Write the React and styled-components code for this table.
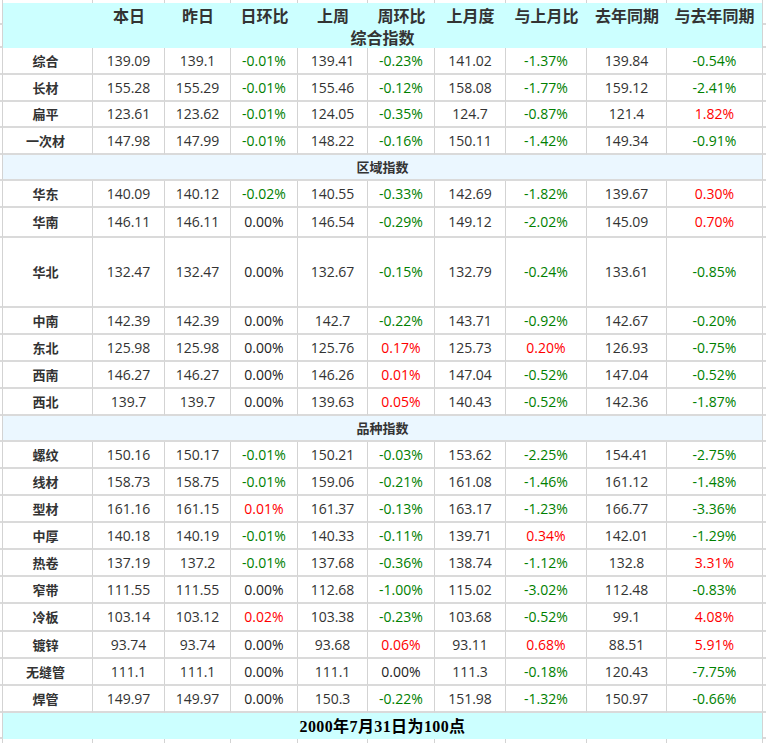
import React from "react";
import styled, { createGlobalStyle } from "styled-components";

const GlobalStyle = createGlobalStyle`
  body {
    margin: 0;
    background: #ffffff;
    font-family: "Open Sans", "Noto Sans CJK SC", sans-serif;
  }
`;

const COLS = "3px 90px 72px 66px 67px 70px 67px 71px 81px 80px 96px 1fr";

const headers = ["本日", "昨日", "日环比", "上周", "周环比", "上月度", "与上月比", "去年同期", "与去年同期"];

const groups = [
  {
    rows: [
      ["综合", "139.09", "139.1", "-0.01%", "139.41", "-0.23%", "141.02", "-1.37%", "139.84", "-0.54%", 27],
      ["长材", "155.28", "155.29", "-0.01%", "155.46", "-0.12%", "158.08", "-1.77%", "159.12", "-2.41%", 27],
      ["扁平", "123.61", "123.62", "-0.01%", "124.05", "-0.35%", "124.7", "-0.87%", "121.4", "1.82%", 26],
      ["一次材", "147.98", "147.99", "-0.01%", "148.22", "-0.16%", "150.11", "-1.42%", "149.34", "-0.91%", 27],
    ],
  },
  {
    title: "区域指数",
    rows: [
      ["华东", "140.09", "140.12", "-0.02%", "140.55", "-0.33%", "142.69", "-1.82%", "139.67", "0.30%", 27],
      ["华南", "146.11", "146.11", "0.00%", "146.54", "-0.29%", "149.12", "-2.02%", "145.09", "0.70%", 30],
      ["华北", "132.47", "132.47", "0.00%", "132.67", "-0.15%", "132.79", "-0.24%", "133.61", "-0.85%", 70],
      ["中南", "142.39", "142.39", "0.00%", "142.7", "-0.22%", "143.71", "-0.92%", "142.67", "-0.20%", 27],
      ["东北", "125.98", "125.98", "0.00%", "125.76", "0.17%", "125.73", "0.20%", "126.93", "-0.75%", 27],
      ["西南", "146.27", "146.27", "0.00%", "146.26", "0.01%", "147.04", "-0.52%", "147.04", "-0.52%", 27],
      ["西北", "139.7", "139.7", "0.00%", "139.63", "0.05%", "140.43", "-0.52%", "142.36", "-1.87%", 27],
    ],
  },
  {
    title: "品种指数",
    rows: [
      ["螺纹", "150.16", "150.17", "-0.01%", "150.21", "-0.03%", "153.62", "-2.25%", "154.41", "-2.75%", 27],
      ["线材", "158.73", "158.75", "-0.01%", "159.06", "-0.21%", "161.08", "-1.46%", "161.12", "-1.48%", 27],
      ["型材", "161.16", "161.15", "0.01%", "161.37", "-0.13%", "163.17", "-1.23%", "166.77", "-3.36%", 27],
      ["中厚", "140.18", "140.19", "-0.01%", "140.33", "-0.11%", "139.71", "0.34%", "142.01", "-1.29%", 27],
      ["热卷", "137.19", "137.2", "-0.01%", "137.68", "-0.36%", "138.74", "-1.12%", "132.8", "3.31%", 27],
      ["窄带", "111.55", "111.55", "0.00%", "112.68", "-1.00%", "115.02", "-3.02%", "112.48", "-0.83%", 27],
      ["冷板", "103.14", "103.12", "0.02%", "103.38", "-0.23%", "103.68", "-0.52%", "99.1", "4.08%", 28],
      ["镀锌", "93.74", "93.74", "0.00%", "93.68", "0.06%", "93.11", "0.68%", "88.51", "5.91%", 27],
      ["无缝管", "111.1", "111.1", "0.00%", "111.1", "0.00%", "111.3", "-0.18%", "120.43", "-7.75%", 27],
      ["焊管", "149.97", "149.97", "0.00%", "150.3", "-0.22%", "151.98", "-1.32%", "150.97", "-0.66%", 27],
    ],
  },
];

const Sheet = styled.div`
  width: 766px;
  overflow: hidden;
`;

const Row = styled.div`
  display: grid;
  grid-template-columns: ${COLS};
  height: ${(p) => p.$h}px;
`;

const Cell = styled.div`
  box-sizing: border-box;
  display: flex;
  align-items: center;
  justify-content: center;
  border-right: 1px solid #d3d3d3;
  border-bottom: ${(p) => (p.$open ? "none" : "2px solid #dadada")};
  font-size: 14px;
  line-height: 18px;
  color: #333333;
  white-space: nowrap;
`;

const Label = styled(Cell)`
  font-family: "Noto Sans CJK SC", sans-serif;
  font-size: 13px;
  font-weight: 700;
  padding-right: 4px;
`;

const Pct = styled(Cell)`
  color: ${(p) => (p.$tone === "down" ? "#008000" : p.$tone === "up" ? "#ff0000" : "#222222")};
`;

const Tail = styled.div`
  box-sizing: border-box;
  border-bottom: ${(p) => (p.$open ? "none" : "2px solid #dadada")};
`;

const HeadCell = styled.div`
  box-sizing: border-box;
  display: flex;
  align-items: center;
  justify-content: center;
  padding-top: 2px;
  background: #ccffff;
  border-right: ${(p) => (p.$last ? "1px solid #d3d3d3" : "none")};
  font-family: "Noto Sans CJK SC", sans-serif;
  font-size: 16px;
  line-height: 18px;
  font-weight: 700;
  color: #333333;
  white-space: nowrap;
`;

const Banner = styled.div`
  box-sizing: border-box;
  grid-column: 2 / 12;
  display: flex;
  align-items: center;
  justify-content: center;
  background: ${(p) => p.$bg};
  border-right: 1px solid #d3d3d3;
  border-bottom: ${(p) => (p.$line ? "2px solid #dadada" : "none")};
  font-family: "Noto Sans CJK SC", sans-serif;
  font-size: ${(p) => p.$size}px;
  line-height: 18px;
  font-weight: 700;
  color: #333333;
`;

const FootNote = styled(Banner)`
  font-family: "Liberation Serif", "Noto Sans CJK SC", serif;
  color: #000000;
  letter-spacing: 0.4px;
  padding-top: 1px;
`;

const tone = (v) => (v.startsWith("-") ? "down" : parseFloat(v) > 0 ? "up" : "flat");

const DataRow = ({ row }) => {
  const [name, ...rest] = row;
  const h = rest.pop();
  return (
    <Row $h={h}>
      <Cell />
      <Label>{name}</Label>
      {rest.map((v, i) =>
        v.endsWith("%") ? (
          <Pct key={i} $tone={tone(v)}>
            {v}
          </Pct>
        ) : (
          <Cell key={i}>{v}</Cell>
        )
      )}
      <Tail />
    </Row>
  );
};

const EmptyRow = ({ h, open }) => (
  <Row $h={h}>
    {Array.from({ length: 11 }).map((_, i) => (
      <Cell key={i} $open={open} />
    ))}
    <Tail $open={open} />
  </Row>
);

const App = () => {
  return (
    <Sheet>
      <GlobalStyle />
      <EmptyRow h={3} open />
      <Row $h={22}>
        <Cell />
        <HeadCell />
        {headers.map((t, i) => (
          <HeadCell key={t} $last={i === headers.length - 1}>
            {t}
          </HeadCell>
        ))}
        <Tail />
      </Row>
      <Row $h={23}>
        <Cell />
        <Banner $bg="#ccffff" $size={16}>
          综合指数
        </Banner>
        <Tail />
      </Row>
      {groups.map((g, gi) => (
        <React.Fragment key={gi}>
          {g.title && (
            <Row $h={26}>
              <Cell />
              <Banner $bg="#ebf7ff" $size={13} $line>
                {g.title}
              </Banner>
              <Tail />
            </Row>
          )}
          {g.rows.map((r) => (
            <DataRow key={r[0]} row={r} />
          ))}
        </React.Fragment>
      ))}
      <Row $h={26}>
        <Cell />
        <FootNote $bg="#ccffff" $size={16}>
          2000年7月31日为100点
        </FootNote>
        <Tail />
      </Row>
      <EmptyRow h={30} />
    </Sheet>
  );
};

export default App;
